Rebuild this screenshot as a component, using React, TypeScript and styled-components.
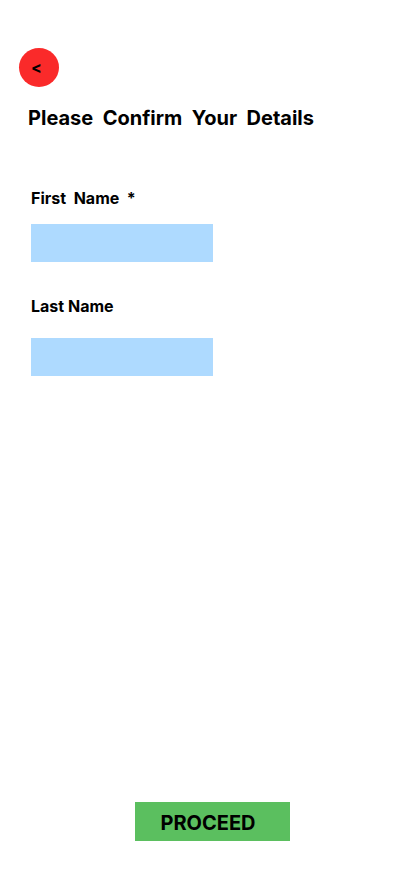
import React from 'react';
import styled, { createGlobalStyle } from 'styled-components';

const GlobalStyle = createGlobalStyle`
  *, *::before, *::after { box-sizing: border-box; }
  body {
    margin: 0;
    background: #ffffff;
    color: #000000;
    font-family: Inter, "Liberation Sans", sans-serif;
  }
`;

const Page = styled.main`
  display: flex;
  flex-direction: column;
  align-items: flex-start;
  min-height: 100vh;
  padding: 48px 19px 33px;
`;

const BackButton = styled.button`
  display: flex;
  align-items: center;
  width: 40px;
  height: 39px;
  padding: 0 0 2px 12px;
  border: 0;
  border-radius: 50%;
  background: #fa2a2a;
  color: #000000;
  font: 700 16px/20px Inter, sans-serif;
  cursor: pointer;
`;

const Title = styled.h1`
  margin: 19px 0 0 9px;
  font-size: 20px;
  line-height: 24px;
  font-weight: 700;
  white-space: pre-wrap;
`;

const Form = styled.form`
  display: flex;
  flex: 1;
  flex-direction: column;
  align-items: flex-start;
  align-self: stretch;
  padding: 58px 12px 0;
`;

const Field = styled.div<{ $gap: number }>`
  display: flex;
  flex-direction: column;
  gap: ${({ $gap }) => $gap}px;
  margin-bottom: 34px;
`;

const Label = styled.label`
  font-size: 16px;
  line-height: 20px;
  font-weight: 700;
  white-space: pre;
`;

const Input = styled.input`
  width: 182px;
  height: 38px;
  padding: 0 8px;
  border: 0;
  border-radius: 0;
  background: #aedaff;
  font: 400 16px/20px Inter, sans-serif;
`;

const ProceedButton = styled.button`
  align-self: center;
  width: 155px;
  height: 39px;
  margin: auto 0 0 22px;
  padding: 2px 8px 0 0;
  border: 0;
  background: #5bbf5f;
  color: #000000;
  font: 700 20px/24px Inter, sans-serif;
  cursor: pointer;
`;

export default function App() {
  return (
    <>
      <GlobalStyle />
      <Page>
        <BackButton type="button" aria-label="Back">&lt;</BackButton>
        <Title>{'Please  Confirm  Your  Details'}</Title>
        <Form onSubmit={(event) => event.preventDefault()}>
          <Field $gap={16}>
            <Label htmlFor="first-name">{'First  Name  *'}</Label>
            <Input id="first-name" name="firstName" type="text" required />
          </Field>
          <Field $gap={22}>
            <Label htmlFor="last-name">Last Name</Label>
            <Input id="last-name" name="lastName" type="text" />
          </Field>
          <ProceedButton type="submit">PROCEED</ProceedButton>
        </Form>
      </Page>
    </>
  );
}
